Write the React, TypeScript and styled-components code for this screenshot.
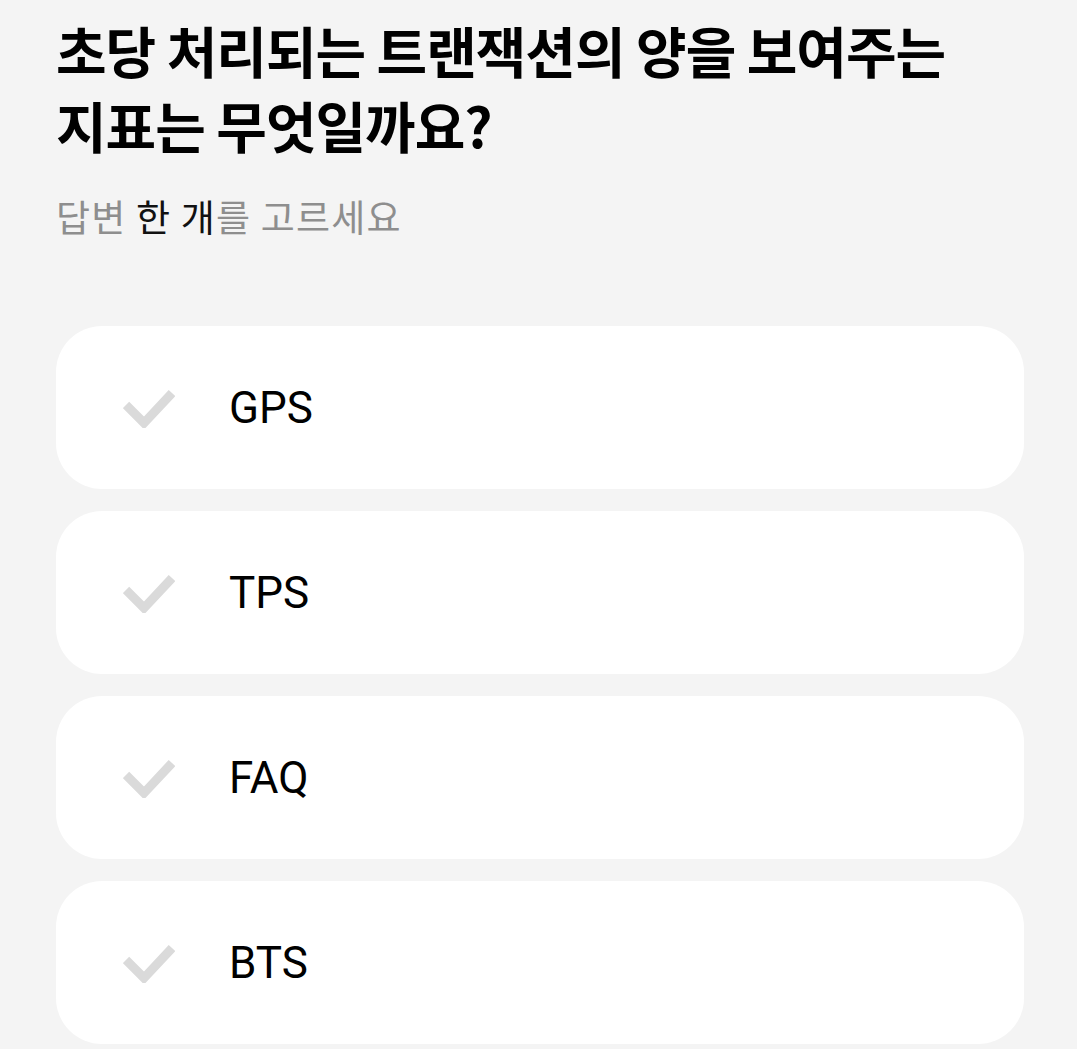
import React from 'react';
import styled, { createGlobalStyle } from 'styled-components';

const GlobalStyle = createGlobalStyle`
  html, body {
    margin: 0;
    padding: 0;
    background: #f4f4f4;
  }
  body {
    font-family: Roboto, "Noto Sans CJK KR", sans-serif;
  }
`;

const Page = styled.div`
  padding: 12px 53px 0 56px;
  display: flex;
  flex-direction: column;
`;

const Title = styled.h1`
  margin: 0;
  font-family: "Noto Sans CJK KR", sans-serif;
  font-weight: 700;
  font-size: 55px;
  line-height: 75px;
  letter-spacing: -1px;
  color: #000;
`;

const Hint = styled.p`
  margin: 31px 0 0 0;
  font-family: "Noto Sans CJK KR", sans-serif;
  font-size: 37px;
  line-height: 46px;
  letter-spacing: 1.2px;
  color: #8e8e8e;
`;

const Strong = styled.span`
  color: #111;
`;

const Options = styled.div`
  margin-top: 87px;
  display: flex;
  flex-direction: column;
  gap: 22px;
`;

const Option = styled.div`
  height: 163px;
  background: #fff;
  border-radius: 46px;
  display: flex;
  align-items: center;
  padding-left: 67px;
`;

const Label = styled.span`
  margin-left: 54px;
  font-family: Roboto, sans-serif;
  font-size: 44px;
  color: #000;
`;

const Check = () => (
  <svg width="52" height="40" viewBox="0 0 52 40">
    <polyline points="3,17 21,35 49,5" fill="none" stroke="#dadada" strokeWidth="9" />
  </svg>
);

const answers = ['GPS', 'TPS', 'FAQ', 'BTS'];

export default function App() {
  return (
    <>
      <GlobalStyle />
      <Page>
        <Title>
          초당 처리되는 트랜잭션의 양을 보여주는
          <br />
          지표는 무엇일까요?
        </Title>
        <Hint>
          답변 <Strong>한 개</Strong>를 고르세요
        </Hint>
        <Options>
          {answers.map((a) => (
            <Option key={a}>
              <Check />
              <Label>{a}</Label>
            </Option>
          ))}
        </Options>
      </Page>
    </>
  );
}
